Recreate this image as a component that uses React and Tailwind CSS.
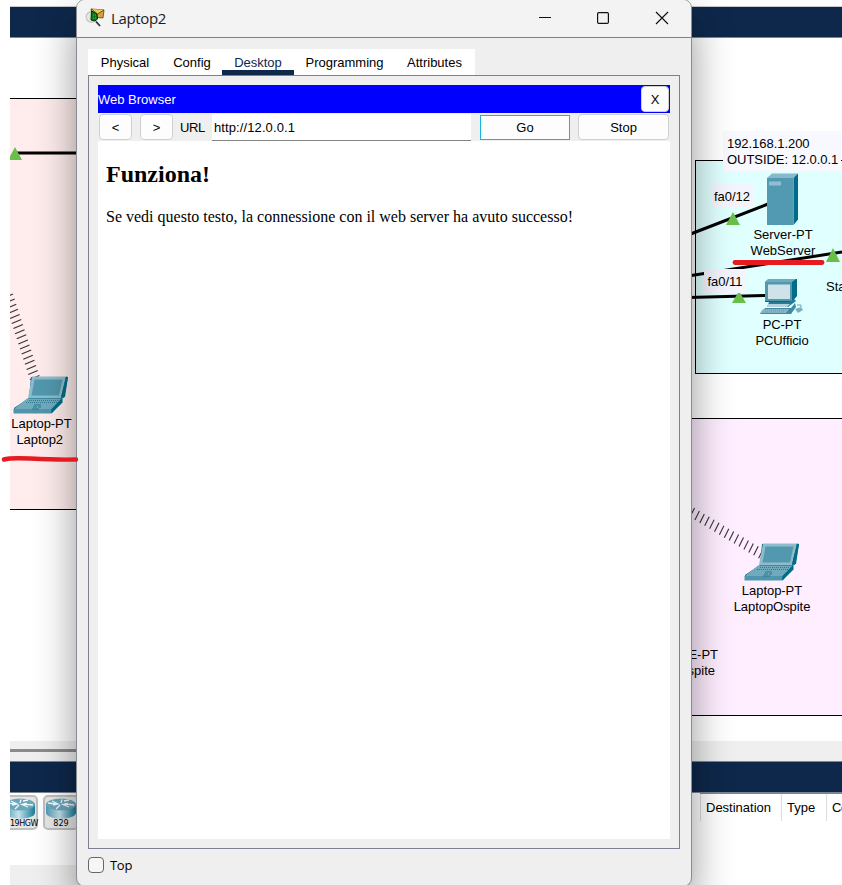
import React from "react";

const Label = ({ className, children }) => (
  <div className={`absolute whitespace-pre text-center text-[13px] leading-4 ${className}`}>{children}</div>
);

function Laptop({ className }) {
  return (
    <svg className={`absolute ${className}`} width="56" height="38" viewBox="0 0 56 38">
      <path d="M18 1h37l-3 20h-3l1 0-11 16H1v-5l15-10z" fill="#006d88" />
      <path d="M19 0.500h34l-5 21.500H15z" fill="#8fbccb" />
      <path d="M21.500 3.500h28l-3.500 16h-27.500z" fill="#5298ae" />
      <path d="M53 0.500l2 0.500-4 21-3-1z" fill="#006d88" />
      <path d="M14 22.500h35L38.500 33.500H0.500z" fill="#72aabd" />
      <path d="M0.500 33h38v4.500h-38z" fill="#4f96ad" />
      <path d="M38.500 33L49.500 21.500v5L38.500 37.500z" fill="#006d88" />
      <path d="M16 24.500h30M13 26.500h31" stroke="#2d7b92" strokeWidth="1" strokeDasharray="1 1" />
      <path d="M21 29h7M20 31h4M25 31h3M19 33h7" stroke="#28788f" strokeWidth="1" />
    </svg>
  );
}

function Server() {
  return (
    <svg className="absolute left-[766px] top-[173px]" width="33" height="53" viewBox="0 0 33 53">
      <path d="M1 5l5-4.500h26l-4.500 4.500z" fill="#88b9ca" />
      <path d="M27.500 5L32 0.500v46L27.500 52z" fill="#006c87" />
      <path d="M1 5h26.500v47H1z" fill="#5299b2" />
      <path d="M3 8.500h12v4H3z" fill="#91bfd0" />
    </svg>
  );
}

function Pc() {
  return (
    <svg className="absolute left-[759px] top-[278px]" width="48" height="38" viewBox="0 0 48 38">
      <path d="M6 4l4-3h28v17l-5 6H6z" fill="#006d88" />
      <path d="M6 4l3-3h28l-4 3z" fill="#72aabd" />
      <path d="M6 4h27v19H6z" fill="#5298ae" />
      <path d="M9 6.500h22v14.500H9z" fill="#cfe2ea" />
      <path d="M10 24h20l5-3 2 2-8 6H8z" fill="#247c95" />
      <path d="M9 26h22l-3 3H8z" fill="#b5d3de" />
      <path d="M6 30h26l4-5 1 4-5 7H1z" fill="#3f8ba3" />
      <path d="M4 31h26l-3 4H1z" fill="#8ab7c7" />
      <path d="M6 32h22M4 34h22" stroke="#5c9db2" strokeDasharray="1 1" />
      <path d="M36 31l6-2 2 3-5 3z" fill="#7eafc1" />
      <path d="M38 27h4v2" stroke="#6aa6ba" fill="none" />
    </svg>
  );
}

function Links() {
  return (
    <svg className="absolute left-0 top-0" width="842" height="741" viewBox="0 0 842 741">
      <g stroke="#000" strokeWidth="3" fill="none">
        <path d="M17 153H80M688 235L768 204M688 276L842 252M688 297.500L766 295.500" />
      </g>
      <g stroke="#333" strokeWidth="1.100">
        {Array.from({ length: 17 }, (_, i) => (
          <path key={i} d={`M${3.500 + i * 1.650} ${298 + i * 5.100}l9.500 -4`} />
        ))}
      </g>
      <g stroke="#333" strokeWidth="1.100">
        {Array.from({ length: 15 }, (_, i) => (
          <path key={i} d={`M${690 + i * 4.900} ${517 + i * 2.950}l4.500 -9`} />
        ))}
      </g>
      <g fill="#6abf4b">
        <path d="M8 160L15 147L22 160zM726 225L733 212L740 225zM826 262L833 248L840 262zM732 303L739 291L746 303z" />
      </g>
    </svg>
  );
}

function RedMarks() {
  return (
    <svg className="pointer-events-none absolute left-0 top-0 z-20" width="842" height="885" viewBox="0 0 842 885">
      <path d="M4 459.500Q10 457.500 30 458.500Q58 460 76 459.500" stroke="#e61b20" strokeWidth="4.500" fill="none" strokeLinecap="round" />
      <path d="M735 262.500H822" stroke="#e61b20" strokeWidth="4.800" strokeLinecap="round" />
    </svg>
  );
}

function Router({ label, className, labelClass, id }) {
  return (
    <div className={`h-[35px] w-[36px] shrink-0 rounded-[5px] border-2 border-[#bfbfbf] bg-[#e6e6e6] ${className}`}>
      <svg className="-ml-px mt-px block" width="34" height="21" viewBox="0 0 34 21">
        <defs>
          <linearGradient id={id}>
            <stop offset="0" stopColor="#4e9ab3" />
            <stop offset=".45" stopColor="#c3e1e9" />
            <stop offset="1" stopColor="#187c98" />
          </linearGradient>
        </defs>
        <path d="M2 6.500v8c0 8 30 8 30 0v-8z" fill={`url(#${id})`} />
        <ellipse cx="17" cy="6.500" rx="15" ry="6" fill="#6aa7bd" />
        <path d="M4 5l8 1M8 3l6 3-5 1M30 7l-9-1M25 9l-6-2.500 5-1M12 11l4-4M18 1.500L17 5M20 3l5-1" stroke="#f4fafc" strokeWidth="1.300" fill="none" />
      </svg>
      <div className={`pt-px font-['DejaVu_Sans'] text-[8px] leading-[8px] ${labelClass}`}>{label}</div>
    </div>
  );
}

function Workspace() {
  return (
    <div className="flex h-[885px] flex-col pl-[10px] pt-[6px]">
      <div className="h-[32px] shrink-0 border-b border-t border-[#7d8593] border-t-[#c8c8c8] bg-[#0e284b]" />
      <div className="h-[703px] shrink-0 bg-white" />
      <div className="flex h-[20px] shrink-0 bg-[#efefef]">
        <div className="mt-[8px] h-[3px] w-[80px] bg-[#8a8a8a]" />
      </div>
      <div className="h-[32px] shrink-0 border-b border-t border-[#7d8593] bg-[#0e284b]" />
      <div className="flex grow">
        <div className="flex w-[300px] shrink-0 flex-col">
          <div className="flex h-[72px] gap-[5px] overflow-hidden pt-[2px]">
            <Router label="19HGW" className="-ml-[8px]" labelClass="pl-[6px] tracking-[-0.5px]" id="routerA" />
            <Router label="829" className="" labelClass="text-center" id="routerB" />
          </div>
          <div className="grow bg-[#efefef]" />
        </div>
        <div className="ml-[390px] flex h-[28px] w-[142px] shrink-0 items-center overflow-hidden border-t border-[#7d8593] text-[13px]">
          <div className="flex h-full w-[81px] shrink-0 items-center border-l border-[#ddd] pl-[5px]">Destination</div>
          <div className="flex h-full w-[45px] shrink-0 items-center border-l border-[#ddd] pl-[5px]">Type</div>
          <div className="flex h-full w-[80px] shrink-0 items-center border-l border-[#ddd] pl-[5px] tracking-[-0.4px]">Color</div>
        </div>
      </div>
    </div>
  );
}

function Diagram() {
  return (
    <div className="absolute left-0 top-0 h-[885px] w-[842px]">
      <div className="absolute left-[10px] top-[98px] h-[412px] w-[80px] border-y border-black bg-[#ffeded]" />
      <div className="absolute left-[695px] top-[160px] h-[214px] w-[160px] border border-black bg-[#e0ffff]" />
      <div className="absolute left-[680px] top-[418px] h-[298px] w-[180px] border-y border-black bg-[#ffeeff]" />
      <Links />
      <div className="absolute left-0 top-[140px] h-[250px] w-[10px] bg-white" />
      <Label className="left-[723px] top-[131px] h-[40px] w-[118px] bg-[#f8f8ff] pl-[4px] pt-[5px] text-left tracking-[-0.05px]">{"192.168.1.200\nOUTSIDE: 12.0.0.1"}</Label>
      <Label className="left-[711px] top-[184px] h-[23px] w-[42px] bg-[#f4f4fc] pt-[5px]">fa0/12</Label>
      <Label className="left-[704px] top-[269px] h-[24px] w-[42px] bg-[#f4f4fc] pt-[5px]">fa0/11</Label>
      <Server />
      <Pc />
      <Laptop className="left-[13px] top-[376px]" />
      <Laptop className="left-[744px] top-[543px]" />
      <Label className="left-[733px] top-[227px] w-[100px]">{"Server-PT\nWebServer"}</Label>
      <Label className="left-[732px] top-[317px] w-[100px] tracking-[-0.1px]">{"PC-PT\nPCUfficio"}</Label>
      <Label className="left-[826px] top-[279px]">Sta</Label>
      <Label className="left-0 top-[416px] w-[83px] tracking-[-0.05px]">{"Laptop-PT\nLaptop2 "}</Label>
      <Label className="left-[722px] top-[583px] w-[100px] tracking-[-0.05px]">{"Laptop-PT\nLaptopOspite"}</Label>
      <Label className="left-[640px] top-[647px] w-[78px] text-right">WRE-PT</Label>
      <Label className="left-[640px] top-[663px] w-[75px] text-right">APOspite</Label>
    </div>
  );
}

function AppIcon() {
  return (
    <svg width="20" height="20" viewBox="0 0 20 20" className="-mt-px shrink-0">
      <path d="M6 1l13 1-1 8-11-1z" fill="#d9a13a" stroke="#39300d" strokeWidth=".7" />
      <path d="M6.500 1l6 5 6.500-4" stroke="#493c12" fill="#f0c860" strokeWidth=".8" />
      <circle cx="6.300" cy="9" r="5.200" fill="#e3e7e1" stroke="#c4c9c2" strokeWidth="1.400" />
      <path d="M6.500 3l5.500 3 .5 5-2.500 2-4-1z" fill="#087b19" stroke="#062b0b" />
      <path d="M8 7h3M8 10h3" stroke="#35c950" strokeDasharray="1 1" />
      <path d="M11 13.500l4 4.500" stroke="#2e3033" strokeWidth="1.800" />
    </svg>
  );
}

const TABS = [
  ["Physical", "w-[74px]"],
  ["Config", "w-[60px]"],
  ["Desktop", "w-[72px]"],
  ["Programming", "w-[101px]"],
  ["Attributes", "w-[79px]"],
];

function LaptopWindow() {
  const button = "flex h-[26px] items-center justify-center rounded-[4px] border border-[#d0d0d0] bg-[#fdfdfd] pt-px";
  return (
    <div className="absolute left-[76px] top-[-1px] z-10 flex h-[888px] w-[616px] flex-col overflow-hidden rounded-[9px] border border-[#888b91] bg-[#efefef] shadow-[0_20px_40px_rgba(0,0,0,0.42)]">
      <header className="flex h-[38px] shrink-0 items-center border-b border-[#7d8090] bg-[#f3f3f3] pl-[8px]">
        <AppIcon />
        <span className="-mt-[2px] ml-[6px] font-['Open_Sans'] text-[15px] leading-5 tracking-[-0.35px] text-[#1c1c1c]">Laptop2</span>
        <svg className="ml-auto mr-[21px] -mt-[2px]" width="134" height="16" viewBox="0 0 134 16" fill="none" stroke="#111" strokeWidth="1.200">
          <path d="M3 7.500h12" />
          <rect x="61.600" y="2.600" width="10.800" height="10.800" rx="1.200" />
          <path d="M120 2l12 12M132 2l-12 12" />
        </svg>
      </header>
      <nav className="ml-[11px] mt-[11px] flex h-[26px] w-[387px] shrink-0 bg-white">
        {TABS.map(([name, width]) => (
          <div key={name} className={`flex items-center justify-center ${width} ${name === "Desktop" ? "border-b-[5px] border-[#0e284b] pt-[6px] text-[#0e284b]" : "pt-px"}`}>
            {name}
          </div>
        ))}
      </nav>
      <main className="ml-[11px] flex h-[774px] w-[592px] shrink-0 flex-col border border-[#7d8090] px-[9px] pt-[9px]">
        <div className="flex h-[28px] w-[572px] shrink-0 items-center justify-between bg-[#0000ff] pr-px text-white">
          <span className="pt-px">Web Browser</span>
          <button className={`${button} w-[28px] text-black`}>X</button>
        </div>
        <div className="flex h-[28px] w-[572px] shrink-0 items-center pl-px">
          <button className={`${button} w-[33px]`}>&lt;</button>
          <button className={`${button} ml-[8px] w-[33px]`}>&gt;</button>
          <span className="ml-[7px] w-[32px] pt-px tracking-[-0.4px]">URL</span>
          <div className="flex h-[27px] w-[259px] items-center border-b border-[#858585] bg-white pl-[2px] pt-[3px] tracking-[0.1px]">http://12.0.0.1</div>
          <button className="ml-[9px] flex h-[25px] w-[90px] items-center justify-center border border-[#16b5df] bg-[#fdfdfd] pt-px">Go</button>
          <button className={`${button} ml-[8px] w-[91px]`}>Stop</button>
        </div>
        <article className="h-[698px] w-[572px] shrink-0 bg-white pl-[8px] pt-[19px] font-['Liberation_Serif']">
          <h1 className="text-[24px] font-bold leading-7">Funziona!</h1>
          <p className="mt-[19px] text-[16px] leading-5">Se vedi questo testo, la connessione con il web server ha avuto successo!</p>
        </article>
      </main>
      <label className="ml-[11px] mt-[8px] flex items-center">
        <span className="h-[16px] w-[16px] rounded-[4px] border border-[#666] bg-[#f6f6f6]" />
        <span className="ml-[6px] font-['Open_Sans'] text-[13px] leading-4 tracking-[-0.3px]">Top</span>
      </label>
    </div>
  );
}

export default function App() {
  return (
    <div className="relative h-[885px] w-[842px] overflow-hidden bg-white font-['Liberation_Sans',Arial,sans-serif] text-[13px] text-black">
      <Workspace />
      <Diagram />
      <LaptopWindow />
      <RedMarks />
    </div>
  );
}
